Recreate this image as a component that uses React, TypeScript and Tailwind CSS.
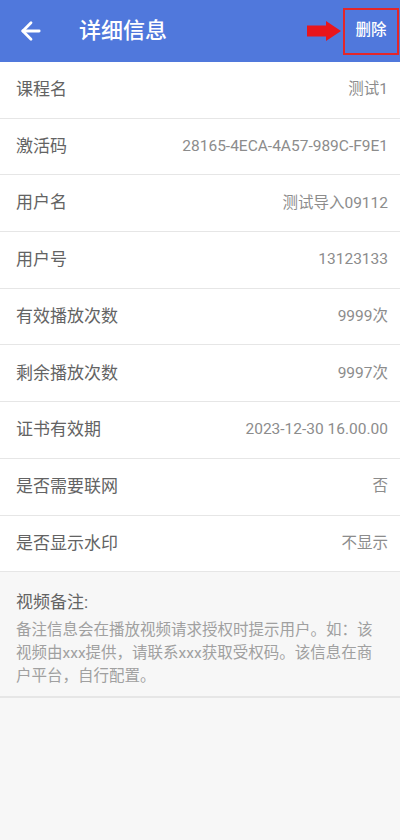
import { ArrowLeft } from 'lucide-react'

const rows: [string, string][] = [
  ['课程名', '测试1'],
  ['激活码', '28165-4ECA-4A57-989C-F9E1'],
  ['用户名', '测试导入09112'],
  ['用户号', '13123133'],
  ['有效播放次数', '9999次'],
  ['剩余播放次数', '9997次'],
  ['证书有效期', '2023-12-30 16.00.00'],
  ['是否需要联网', '否'],
  ['是否显示水印', '不显示'],
]

export default function App() {
  return (
    <div
      className="min-h-[840px] w-[400px] bg-[#f7f7f7]"
      style={{ fontFamily: "Roboto, 'Noto Sans CJK SC', sans-serif" }}
    >
      {/* Header */}
      <div className="relative flex h-[62px] items-center bg-[#5078dc] text-white">
        <ArrowLeft size={28} strokeWidth={2.4} className="ml-[17px]" />
        <h1 className="ml-[34px] text-[22px] font-medium leading-none">详细信息</h1>
        <div className="ml-auto mr-[1px] flex items-center">
          {/* red pointer */}
          <svg width="34" height="20" viewBox="0 0 34 20" className="mr-[2px]">
            <path d="M0 4.5H19V0L34 10L19 20V15.5H0Z" fill="#e8151c" />
          </svg>
          <div className="flex h-[47px] w-[56px] items-center justify-center border-2 border-[#e3262a]">
            <span className="text-[15.5px] font-medium">删除</span>
          </div>
        </div>
      </div>

      {/* Rows */}
      <div className="bg-white">
        {rows.map(([label, value]) => (
          <div
            key={label}
            className="flex h-[56.7px] items-center justify-between border-b border-[#e6e6e6] pl-4 pr-3"
          >
            <span className="text-[17px] text-[#636363]">{label}</span>
            <span className="text-[15.5px] text-[#8c8c8c]">{value}</span>
          </div>
        ))}
      </div>

      {/* Note */}
      <div className="border-b-2 border-[#e6e6e6] bg-[#f7f7f7] px-4 pb-[8px] pt-[19px]">
        <p className="text-[17px] leading-[22px] text-[#636363]">视频备注:</p>
        <p className="mt-[6px] text-[15.5px] leading-[23px] text-[#a0a0a0]">
          备注信息会在播放视频请求授权时提示用户。如：该视频由xxx提供，请联系xxx获取受权码。该信息在商户平台，自行配置。
        </p>
      </div>
    </div>
  )
}
